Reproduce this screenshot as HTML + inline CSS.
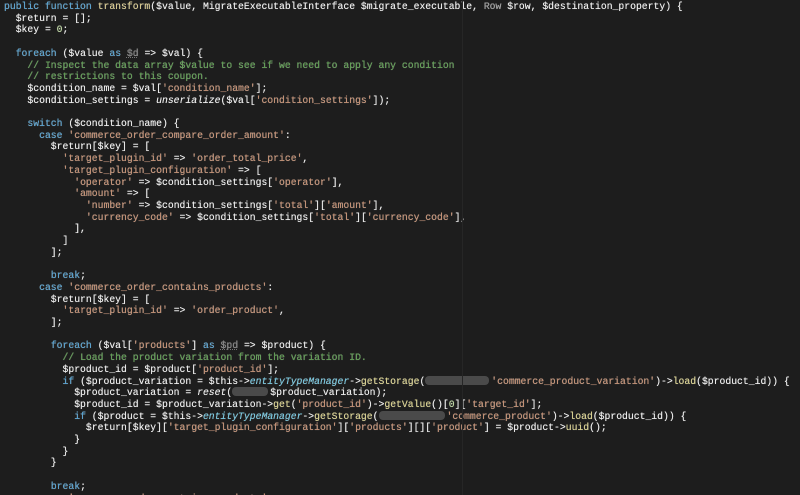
<!DOCTYPE html>
<html><head><meta charset="utf-8"><style>
html,body{margin:0;padding:0;background:#1d1d1d;width:800px;height:495px;overflow:hidden}
pre{margin:0;padding:1px 0 0 4px;font-family:"Liberation Mono",monospace;font-size:9.75px;line-height:11.7px;color:#ececec;white-space:pre;text-shadow:0 0 0.4px #ececec}
.k{color:#4f9fd0}.f{color:#d9c98a}.s{color:#c38b6c}.c{color:#579a49}.i{font-style:italic}
.m{color:#6ec4de;font-style:italic}.g{color:#d8cf88}.d{color:#7a7a7a;text-decoration:underline dotted #777}.n{color:#b9d59a}.r{color:#9a9a9a}
.p{display:inline-block;background:#4a4a4a;border-radius:4px;height:9px;vertical-align:-1px;margin-right:2px}
.rule{position:absolute;left:462px;top:0;width:1px;height:495px;background:#262626}
</style></head><body>
<div class="rule"></div>
<pre><span class="k">public function</span> <span class="f">transform</span>($value, MigrateExecutableInterface $migrate_executable, <span class="r">Row</span> $row, $destination_property) {
  $return = [];
  $key = <span class="n">0</span>;

  <span class="k">foreach</span> ($value <span class="k">as</span> <span class="d">$d</span> =&gt; $val) {
    <span class="c">// Inspect the data array $value to see if we need to apply any condition</span>
    <span class="c">// restrictions to this coupon.</span>
    $condition_name = $val[<span class="s">'condition_name'</span>];
    $condition_settings = <span class="i">unserialize</span>($val[<span class="s">'condition_settings'</span>]);

    <span class="k">switch</span> ($condition_name) {
      <span class="k">case</span> <span class="s">'commerce_order_compare_order_amount'</span>:
        $return[$key] = [
          <span class="s">'target_plugin_id'</span> =&gt; <span class="s">'order_total_price'</span>,
          <span class="s">'target_plugin_configuration'</span> =&gt; [
            <span class="s">'operator'</span> =&gt; $condition_settings[<span class="s">'operator'</span>],
            <span class="s">'amount'</span> =&gt; [
              <span class="s">'number'</span> =&gt; $condition_settings[<span class="s">'total'</span>][<span class="s">'amount'</span>],
              <span class="s">'currency_code'</span> =&gt; $condition_settings[<span class="s">'total'</span>][<span class="s">'currency_code'</span>],
            ],
          ]
        ];

        <span class="k">break</span>;
      <span class="k">case</span> <span class="s">'commerce_order_contains_products'</span>:
        $return[$key] = [
          <span class="s">'target_plugin_id'</span> =&gt; <span class="s">'order_product'</span>,
        ];

        <span class="k">foreach</span> ($val[<span class="s">'products'</span>] <span class="k">as</span> <span class="d">$pd</span> =&gt; $product) {
          <span class="c">// Load the product variation from the variation ID.</span>
          $product_id = $product[<span class="s">'product_id'</span>];
          <span class="k">if</span> ($product_variation = $this-&gt;<span class="m">entityTypeManager</span>-&gt;<span class="g">getStorage</span>(<span class="p" style="width:64px"></span><span class="s">'commerce_product_variation'</span>)-&gt;<span class="g">load</span>($product_id)) {
            $product_variation = <span class="i">reset</span>(<span class="p" style="width:36px"></span>$product_variation);
            $product_id = $product_variation-&gt;<span class="g">get</span>(<span class="s">'product_id'</span>)-&gt;<span class="g">getValue</span>()[<span class="n">0</span>][<span class="s">'target_id'</span>];
            <span class="k">if</span> ($product = $this-&gt;<span class="m">entityTypeManager</span>-&gt;<span class="g">getStorage</span>(<span class="p" style="width:66px"></span><span class="s">'commerce_product'</span>)-&gt;<span class="g">load</span>($product_id)) {
              $return[$key][<span class="s">'target_plugin_configuration'</span>][<span class="s">'products'</span>][][<span class="s">'product'</span>] = $product-&gt;<span class="g">uuid</span>();
            }
          }
        }

        <span class="k">break</span>;
      <span class="k">case</span> <span class="s">'commerce_order_contains_products'</span>:
</pre>
</body></html>
